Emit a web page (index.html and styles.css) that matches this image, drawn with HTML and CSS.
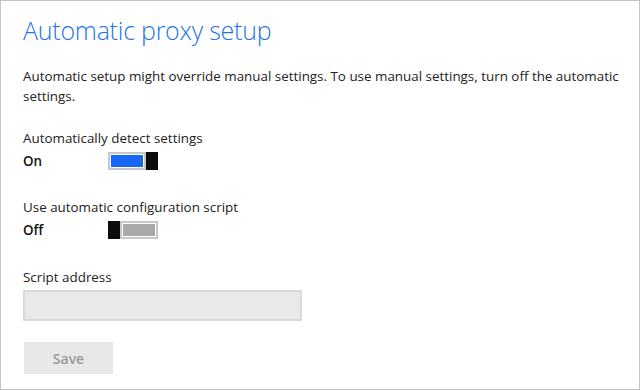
FILE: index.html
```html
<!DOCTYPE html>
<html>
<head>
<meta charset="utf-8">
<link rel="stylesheet" href="styles.css">
</head>
<body>
<div class="frame">
  <h1 class="title">Automatic proxy setup</h1>
  <p class="desc">Automatic setup might override manual settings. To use manual settings, turn off the automatic settings.</p>

  <div class="setting first">
    <div class="label">Automatically detect settings</div>
    <div class="state-row">
      <span class="state">On</span>
      <span class="toggle on"><span class="track"></span><span class="thumb"></span></span>
    </div>
  </div>

  <div class="setting second">
    <div class="label">Use automatic configuration script</div>
    <div class="state-row">
      <span class="state">Off</span>
      <span class="toggle off"><span class="thumb"></span><span class="track"></span></span>
    </div>
  </div>

  <div class="field">
    <div class="label">Script address</div>
    <div class="input"></div>
  </div>

  <button class="save">Save</button>
</div>
</body>
</html>
```

FILE: styles.css
```css
html, body {
  margin: 0;
  padding: 0;
  background: #ffffff;
}

.frame {
  box-sizing: border-box;
  width: 640px;
  height: 390px;
  border: 1px solid #c4c4c4;
  padding: 11px 0 0 22px;
  font-family: "Open Sans", "Noto Sans", sans-serif;
  color: #1e1e1e;
  overflow: hidden;
}

.title {
  margin: 0;
  font-size: 25px;
  font-weight: 300;
  color: #1f75e8;
  line-height: 36px;
  letter-spacing: -0.25px;
}

.desc {
  margin: 18px 0 0 0;
  font-size: 13.4px;
  line-height: 20px;
  width: 600px;
  color: #222;
}

.setting {
  margin-top: 22px;
}

.setting.second {
  margin-top: 25px;
}

.label {
  font-size: 13.4px;
  line-height: 20px;
  color: #222;
}

.state-row {
  display: flex;
  align-items: center;
  height: 22px;
  margin-top: 2px;
}

.state {
  width: 85px;
  font-size: 13.4px;
  font-weight: 600;
  color: #111;
}

.toggle {
  display: flex;
  width: 50px;
  height: 18px;
}

.toggle .track {
  flex: 1;
  box-sizing: border-box;
  padding: 1px;
  background-clip: content-box;
  border: 2px solid #c8c8c8;
  box-shadow: inset 0 0 0 1px #ffffff;
}

.toggle.on .track {
  background-color: #1768f5;
}

.toggle.off .track {
  background-color: #a9a9a9;
}

.toggle .thumb {
  width: 12px;
  background: #0c0c0c;
}

.field {
  margin-top: 26px;
}

.input {
  box-sizing: border-box;
  width: 279px;
  height: 31px;
  margin-top: 3px;
  background: #e9e9e9;
  border: 2px solid #d9d9d9;
}

.save {
  display: block;
  margin-top: 21px;
  margin-left: 1px;
  width: 89px;
  height: 32px;
  border: none;
  background: #e8e8e8;
  color: #9a9a9a;
  font-family: "Open Sans", "Noto Sans", sans-serif;
  font-size: 14px;
  font-weight: 600;
  padding: 0;
}
```
